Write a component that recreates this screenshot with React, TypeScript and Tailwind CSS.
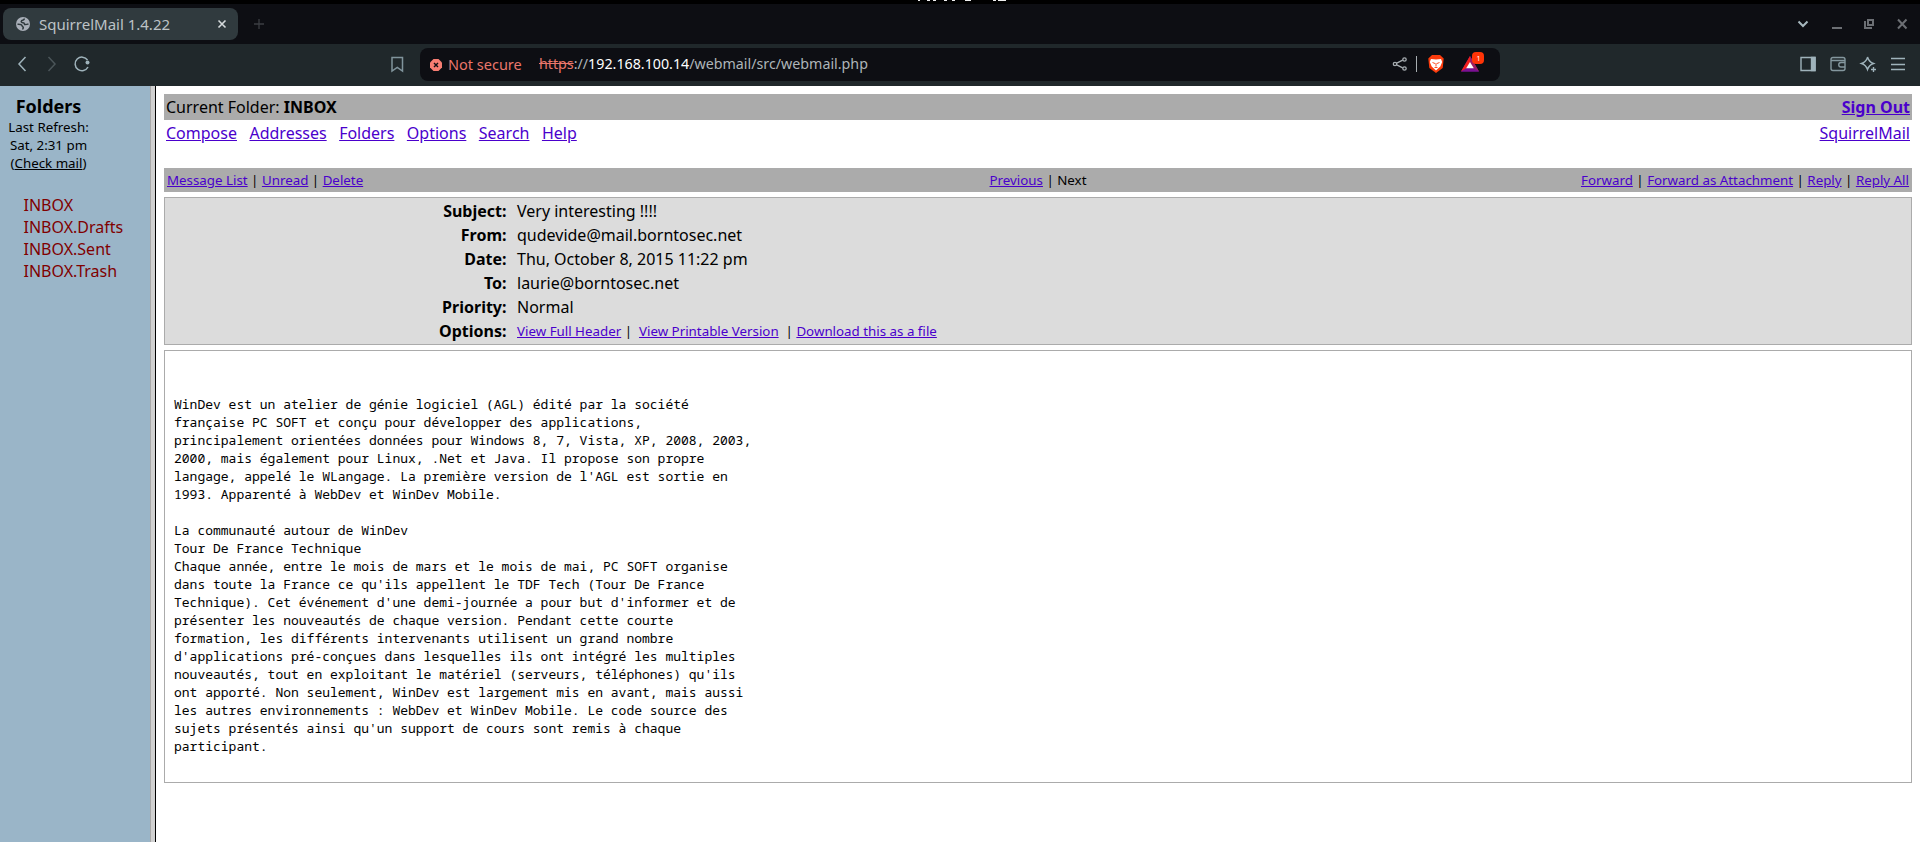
import React from 'react';

function Link({ children }: { children: React.ReactNode }) {
  return <a className="text-[#4a00cc] underline" href="#">{children}</a>;
}

const body = `WinDev est un atelier de génie logiciel (AGL) édité par la société
française PC SOFT et conçu pour développer des applications,
principalement orientées données pour Windows 8, 7, Vista, XP, 2008, 2003,
2000, mais également pour Linux, .Net et Java. Il propose son propre
langage, appelé le WLangage. La première version de l'AGL est sortie en
1993. Apparenté à WebDev et WinDev Mobile.

La communauté autour de WinDev
Tour De France Technique
Chaque année, entre le mois de mars et le mois de mai, PC SOFT organise
dans toute la France ce qu'ils appellent le TDF Tech (Tour De France
Technique). Cet événement d'une demi-journée a pour but d'informer et de
présenter les nouveautés de chaque version. Pendant cette courte
formation, les différents intervenants utilisent un grand nombre
d'applications pré-conçues dans lesquelles ils ont intégré les multiples
nouveautés, tout en exploitant le matériel (serveurs, téléphones) qu'ils
ont apporté. Non seulement, WinDev est largement mis en avant, mais aussi
les autres environnements : WebDev et WinDev Mobile. Le code source des
sujets présentés ainsi qu'un support de cours sont remis à chaque
participant.`;

const headers = [
  ['Subject:', 'Very interesting !!!!'],
  ['From:', 'qudevide@mail.borntosec.net'],
  ['Date:', 'Thu, October 8, 2015 11:22 pm'],
  ['To:', 'laurie@borntosec.net'],
  ['Priority:', 'Normal'],
];

function TabStrip() {
  return (
    <div className="flex h-10 items-center bg-[#0d0e13] pl-[3px] text-[#bdc3c6]">
      <div className="flex h-8 w-[235px] items-center rounded-lg bg-[#303a3e] pr-[10px] pl-[13px]">
        <svg className="h-[14px] w-[14px]" viewBox="0 0 14 14">
          <circle cx="7" cy="7" r="7" fill="#a9afb8" />
          <path d="M8.300 1.500C8.600 3.300 6.700 3 5.600 3.700 4.600 4.800 5.600 5.700 7 5.700c1.300 0 1.500.9 1.600 1.800 1.500.1 2.700-.1 3.900-.7M1.500 7.200c1.800-.1 4.200 0 4.500 1.500.2.900 1.300.9 1.300 1.900 0 .8-.6 1.300-.6 1.900" fill="none" stroke="#303a3e" strokeWidth="1.500" />
        </svg>
        <span className="ml-[9px] flex-1 text-[15px] leading-5">SquirrelMail 1.4.22</span>
        <svg className="h-3 w-3" viewBox="0 0 12 12"><path d="M2.500 2.500l7 7M9.500 2.500l-7 7" stroke="#d5dadc" strokeWidth="1.600" /></svg>
      </div>
      <svg className="ml-[15px] h-3 w-3" viewBox="0 0 12 12"><path d="M6 1v10M1 6h10" stroke="#3b3e43" strokeWidth="1.300" /></svg>
      <div className="flex-1" />
      <svg className="h-4 w-[123px]" viewBox="1797 16 123 16" fill="none">
        <path d="M1798.500 21.500l4.500 4.500 4.500-4.500" stroke="#a7b8be" strokeWidth="2" />
        <path d="M1832 28h10" stroke="#6c6f74" strokeWidth="2" />
        <path d="M1868 20h5v5h-5zM1865 21v7h7" stroke="#6c6f74" strokeWidth="2" />
        <path d="M1898 19.500l8.500 9M1906.500 19.500l-8.500 9" stroke="#6c6f74" strokeWidth="2" />
      </svg>
    </div>
  );
}

function Toolbar() {
  return (
    <div className="flex h-[42px] items-start bg-[#20282b] pt-1">
      <svg className="h-8 w-[420px]" viewBox="0 48 420 32" fill="none" strokeWidth="1.500">
        <path d="M25.500 57l-6.500 7 6.500 7" stroke="#9fb3bb" />
        <path d="M48.500 57l6.500 7-6.500 7" stroke="#4b5559" />
        <path d="M87.500 60a6.800 6.800 0 1 0 .5 7" stroke="#9fb3bb" />
        <circle cx="87.500" cy="62.500" r="2" fill="#9fb3bb" />
        <path d="M392 57.500h10.500v13.500l-5.250-3.500-5.250 3.500z" stroke="#80949c" />
      </svg>
      <div className="flex h-[33px] w-[1080px] items-center rounded-lg bg-[#0d0e13] pl-[10px] leading-5">
        <svg className="h-3 w-3" viewBox="0 0 12 12"><path d="M3.500 0h5L12 3.500v5L8.500 12h-5L0 8.500v-5z" fill="#f77d72" /><path d="M4 4l4 4M8 4l-4 4" stroke="#0d0e13" strokeWidth="1.400" /></svg>
        <span className="mb-[2px] ml-[6px] w-[91px] text-[14.500px] text-[#ea766b]">Not secure</span>
        <span className="mb-[2px] flex-1 text-[14.250px] text-[#aeb5b9]"><span className="text-[#ea766b] line-through">https</span>://<span className="text-white">192.168.100.14</span>/webmail/src/webmail.php</span>
        <svg className="h-[33px] w-[110px]" viewBox="1390 48 110 33">
          <g fill="none" stroke="#a7adb1" strokeWidth="1.300"><circle cx="1395" cy="64" r="1.700" /><circle cx="1404.500" cy="59.500" r="1.700" /><circle cx="1404.500" cy="68.500" r="1.700" /><path d="M1396.700 63.200l6-3M1396.700 64.800l6 3" /></g>
          <path d="M1416.500 56v16" stroke="#a7adb1" />
          <path d="M1432 55h8l3.700 3.500-1 9.500-6.700 5-6.700-5-1-9.500z" fill="#fb3b0c" />
          <path d="M1431 59l5 .5 5-.5 1.200 3-1.900 4.500-4.300 4-4.300-4-1.900-4.500z" fill="#fff" />
          <path d="M1432.500 62.500l2.500 1M1439.500 62.500l-2.500 1M1436 63v3.500M1434.500 67.500h3" stroke="#fb3b0c" strokeWidth=".9" />
          <path d="M1470 56l-9 15.500h18z" fill="#7a1093" /><path d="M1470 56l-9 15.500 9-5z" fill="#f21f1a" /><path d="M1470 56l9 15.500-9-5z" fill="#9e1f63" /><path d="M1461 71.500h18l-5.400-3.200h-7.200z" fill="#7a1093" /><path d="M1470 62l-3.800 6.300h7.600z" fill="#fff" />
          <rect x="1472" y="52" width="12" height="12" rx="4" fill="#ff3407" />
          <text x="1476.500" y="60.500" fill="#fff" className="text-[7px]">1</text>
        </svg>
      </div>
      <div className="flex-1" />
      <svg className="h-8 w-[124px]" viewBox="1796 48 124 32" fill="none" stroke="#9fb3bb" strokeWidth="1.400">
        <path d="M1801 57.500h14v13h-14z" /><path d="M1811.500 57.500h3.500v13h-3.500z" fill="#9fb3bb" />
        <g stroke="#84979e"><rect x="1831" y="57.500" width="14" height="13" rx="2" /><path d="M1831 60.500h14M1845 62.500h-4a2.200 2.200 0 0 0 0 4.500h4" /></g>
        <path d="M1867.500 57q1.500 5 6 6.500-4.500 1.500-6 6-1.500-4.500-6-6 4.500-1.500 6-6zM1873.500 67v5M1871 69.500h5" />
        <path d="M1891 58.500h14M1891 64.500h14M1891 69.500h14" />
      </svg>
    </div>
  );
}

export default function App() {
  return (
    <div className="flex h-[842px] w-[1920px] flex-col overflow-hidden bg-white font-['Noto_Sans',sans-serif] text-[16px] leading-[22px] text-black">
      <div className="flex h-1 bg-black pl-[917px]"><svg className="h-1 w-[90px]" viewBox="0 0 90 4"><path d="M1 .5h2M10 .5h3M16 .5h3M27 .5h3M35 .5h3M48 .5h6M76 .5h3M81 .5h8" stroke="#eee" /></svg></div>
      <TabStrip />
      <Toolbar />
      <div className="flex flex-1">
        <aside className="w-[150px] bg-[#9ab5c8] pt-[9px]">
          <div className="w-[97px] text-center">
            <div className="text-[18px] leading-[23px] font-bold">Folders</div>
            <div className="text-[13.330px] leading-[18px]">Last Refresh:<br />Sat, 2:31 pm<br />(<a className="underline">Check mail</a>)</div>
          </div>
          <ul className="mt-[22px] pl-[23.500px] text-[#800000]">
            {['INBOX', 'INBOX.Drafts', 'INBOX.Sent', 'INBOX.Trash'].map((f) => <li key={f}>{f}</li>)}
          </ul>
        </aside>
        <div className="w-[6px] border-r border-l border-l-[#a8a8a8] border-r-black bg-[#d0d0d0]" />
        <main className="flex-1 pt-2 pr-[8px] pl-[8px]">
          <div className="flex h-[26px] items-center justify-between bg-[#ababab] px-[2px]">
            <span>Current Folder: <b>INBOX</b></span>
            <b><Link>Sign Out</Link></b>
          </div>
          <div className="flex h-[26px] items-center justify-between px-[2px]">
            <div className="flex gap-[12.480px]">
              {['Compose', 'Addresses', 'Folders', 'Options', 'Search', 'Help'].map((n) => <Link key={n}>{n}</Link>)}
            </div>
            <Link>SquirrelMail</Link>
          </div>
          <div className="mt-[22px] grid h-6 grid-cols-3 items-center bg-[#ababab] px-[3px] text-[13.330px]">
            <span><Link>Message List</Link> | <Link>Unread</Link> | <Link>Delete</Link></span>
            <span className="text-center"><Link>Previous</Link> | Next</span>
            <span className="text-right"><Link>Forward</Link> | <Link>Forward as Attachment</Link> | <Link>Reply</Link> | <Link>Reply All</Link></span>
          </div>
          <div className="mt-[5px] h-[148px] border border-[#ababab] bg-[#dcdcdc] pt-px">
            {headers.map(([k, v]) => (
              <div key={k} className="flex h-6 items-center"><b className="w-[341.500px] text-right">{k}</b><span className="ml-[10.500px]">{v}</span></div>
            ))}
            <div className="flex h-6 items-center">
              <b className="w-[341.500px] text-right">Options:</b>
              <span className="ml-[10.500px] text-[13.330px] whitespace-pre"><Link>View Full Header</Link>{' |  '}<Link>View Printable Version</Link>{'  | '}<Link>Download this as a file</Link></span>
            </div>
          </div>
          <div className="mt-[5px] h-[433px] border border-[#ababab] bg-white pt-[44px] pl-[9px]">
            <pre className="font-['Noto_Sans_Mono','DejaVu_Sans_Mono',monospace] text-[13px] leading-[18px]">{body}</pre>
          </div>
        </main>
      </div>
    </div>
  );
}
